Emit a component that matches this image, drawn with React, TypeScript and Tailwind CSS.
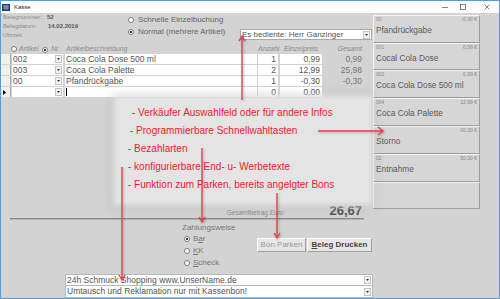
import React from 'react';

const ROWS = [
  { nr: '002', name: 'Coca Cola Dose 500 ml', qty: '1', price: '0,99', total: '0,99' },
  { nr: '003', name: 'Coca Cola Palette', qty: '2', price: '12,99', total: '25,98' },
  { nr: '00', name: 'Pfandrückgabe', qty: '1', price: '-0,30', total: '-0,30' },
  { nr: '', name: '', qty: '0', price: '0,00', total: '', current: true },
];

const KEYS = [
  { code: '00', name: 'Pfandrückgabe', price: '-0,30 €', h: 'h-[28px]' },
  { code: '001', name: 'Cocal Cola Dose', price: '0,59 €', h: 'h-[27px]' },
  { code: '002', name: 'Coca Cola Dose 500 ml', price: '0,99 €', h: 'h-[28px]' },
  { code: '004', name: 'Coca Cola Palette', price: '12,99 €', h: 'h-[28px]' },
  { code: '', name: 'Storno', price: '00,00 €', h: 'h-[28px]' },
  { code: '02', name: 'Entnahme', price: '50,00 €', h: 'h-[28px]' },
  { code: '', name: '', price: '', h: 'h-[27px]' },
];

const NOTES = [
  { text: '- Verkäufer Auswahlfeld oder für andere Infos', cls: 'ml-[4px]' },
  { text: '- Programmierbare Schnellwahltasten', cls: 'ml-[2px]' },
  { text: '- Bezahlarten', cls: 'ml-0' },
  { text: '- konfigurierbare End- u- Werbetexte', cls: 'ml-0' },
  { text: '- Funktion zum Parken, bereits angelgter Bons', cls: 'ml-0' },
];

function Radio({ on }: { on?: boolean }) {
  return (
    <span className="inline-flex h-[6px] w-[6px] shrink-0 items-center justify-center rounded-full border border-[#7a7a7a] bg-white">
      {on && <span className="h-[2px] w-[2px] rounded-full bg-black" />}
    </span>
  );
}

function DropBtn() {
  return (
    <span className="ml-auto mr-[1px] flex h-[8px] w-[7px] shrink-0 items-center justify-center border border-[#c4c4c4] bg-[#f2f2f2]">
      <svg width="3" height="2" viewBox="0 0 3 2">
        <path d="M0 0h3L1.5 2z" fill="#333" />
      </svg>
    </span>
  );
}

export default function App() {
  return (
    <div className="relative flex h-[299px] w-[500px] flex-col overflow-hidden border border-[#5b9bd5] bg-[#d3d3d3] font-['Liberation_Sans',Arial,sans-serif] text-[#666]">
      {/* title bar */}
      <div className="flex h-[12px] shrink-0 items-center bg-white">
        <svg className="ml-[1px]" width="8" height="7" viewBox="0 0 8 7">
          <rect width="8" height="7" fill="#1f3a6e" />
          <path d="M1 2h6M1 4h6M3 1v5M5 1v5" stroke="#cfd8e8" strokeWidth="0.6" />
        </svg>
        <span className="ml-[4px] text-[6px] leading-none text-[#222]">Kasse</span>
        <div className="ml-auto flex items-center pr-[9px]">
          <svg width="6" height="6" viewBox="0 0 6 6">
            <path d="M0 3.5h6" stroke="#333" strokeWidth="0.6" />
          </svg>
          <svg className="ml-[12px]" width="6" height="6" viewBox="0 0 6 6">
            <rect x="0.5" y="0.5" width="5" height="5" fill="none" stroke="#333" strokeWidth="0.6" />
          </svg>
          <svg className="ml-[18px]" width="6" height="6" viewBox="0 0 6 6">
            <path d="M0.5 0.5l5 5M5.5 0.5l-5 5" stroke="#333" strokeWidth="0.6" />
          </svg>
        </div>
      </div>

      <div className="flex flex-1">
        {/* main form */}
        <div className="flex w-[372px] flex-col">
          <div className="flex h-[30px]">
            <div className="w-[125px] pl-[2px] text-[6px] leading-[9px] text-[#8c8c8c]">
              <div>
                <span className="inline-block w-[44px]">Belegnummer:</span>
                <span className="font-bold text-[#555]">52</span>
              </div>
              <div>
                <span className="inline-block w-[45px]">Belegdatum:</span>
                <span className="font-bold text-[#555]">14.02.2019</span>
              </div>
              <div>Uhrzeit</div>
            </div>
            <div className="w-[114px] pl-[2px] pt-[1px] text-[8px] leading-[12px] text-[#666]">
              <div className="flex items-center gap-[4px]">
                <Radio />
                <span>Schnelle Einzelbuchung</span>
              </div>
              <div className="flex items-center gap-[4px]">
                <Radio on />
                <span>Normal (mehrere Artikel)</span>
              </div>
            </div>
            <div className="mt-[16px] flex h-[11px] w-[132px] items-center border border-[#a8a8a8] bg-white pl-[1px] text-[8px] leading-none text-[#555]">
              <span>Es bediente: Herr Ganzinger</span>
              <DropBtn />
            </div>
          </div>

          {/* column headers */}
          <div className="flex h-[11px] items-center text-[7px] italic leading-none text-[#8a8a8a]">
            <span className="w-[10px]" />
            <Radio />
            <span className="ml-[2px] inline-block w-[21px]">Artikel</span>
            <span className="ml-[2px]">
              <Radio on />
            </span>
            <span className="ml-[3px] inline-block w-[15px]">Nr</span>
            <span className="inline-block w-[192px]">Artikelbeschreibung</span>
            <span className="inline-block w-[19px] text-right">Anzahl</span>
            <span className="ml-[2px] inline-block w-[44px] text-center">Einzelpreis</span>
            <span className="inline-block w-[39px] text-right">Gesamt</span>
          </div>

          {/* rows */}
          {ROWS.map((r, i) => (
            <div key={i} className="flex h-[11px] items-start text-[8.5px] leading-[10px] text-[#555]">
              <span className="flex h-[10px] w-[10px] items-center border-r border-[#a8a8a8] bg-[#f0f0f0] pl-[2px]">
                {r.current && (
                  <svg width="3" height="5" viewBox="0 0 3 5">
                    <path d="M0 0l3 2.5L0 5z" fill="#000" />
                  </svg>
                )}
              </span>
              <span className="ml-[1px] flex h-[10px] w-[51px] items-center bg-white pl-[1px]">
                <span>{r.nr}</span>
                <DropBtn />
              </span>
              <span className="ml-[2px] flex h-[10px] w-[192px] items-center bg-white pl-[1px]">
                {r.current ? <span className="h-[8px] w-[1px] bg-black" /> : r.name}
              </span>
              <span className="ml-[1px] h-[10px] w-[20px] bg-white pr-[2px] text-right">{r.qty}</span>
              <span className="ml-[2px] h-[10px] w-[42px] bg-white pr-[2px] text-right">{r.price}</span>
              <span className="h-[10px] w-[40px] text-right text-[#777]">{r.total}</span>
            </div>
          ))}

          <div className="h-[104px]" />

          {/* total */}
          <div className="flex h-[16px] items-end justify-end pb-[1px] pr-[11px] leading-none">
            <span className="mb-[1px] text-[6.5px] text-[#8a8a8a]">
              Gesamtbetrag <i>Euro</i>
            </span>
            <span className="ml-[46px] text-[13px] font-bold text-[#555]">26,67</span>
          </div>
          <div className="ml-[9px] h-[2px] w-[354px] border-t border-b border-t-[#8c8c8c] border-b-[#b0b0b0]" />

          {/* payment + buttons */}
          <div className="flex h-[52px]">
            <div className="ml-[181px] w-[75px] pt-[3px] text-[8px] text-[#777]">
              <div className="leading-[10px]">Zahlungsweise</div>
              <div className="pl-[2px] leading-[12px]">
                <div className="flex items-center gap-[3px]">
                  <Radio on />
                  <span>
                    B<u>a</u>r
                  </span>
                </div>
                <div className="flex items-center gap-[3px]">
                  <Radio />
                  <span>
                    <u>K</u>K
                  </span>
                </div>
                <div className="flex items-center gap-[3px]">
                  <Radio />
                  <span>
                    <u>S</u>check
                  </span>
                </div>
              </div>
            </div>
            <div className="mt-[18px] flex h-[14px]">
              <button className="w-[49px] border border-t-white border-l-white border-r-[#a0a0a0] border-b-[#a0a0a0] bg-[#e6e6e6] text-[8px] text-[#9a9a9a]">
                Bon Parken
              </button>
              <button className="ml-[1px] w-[65px] border border-t-white border-l-white border-r-[#a0a0a0] border-b-[#a0a0a0] bg-[#e6e6e6] text-[8px] font-bold text-[#444]">
                <u>B</u>eleg Drucken
              </button>
            </div>
          </div>

          {/* footer texts */}
          <div className="ml-[64px] mt-[2px] w-[308px] text-[8.5px] leading-none text-[#555]">
            <div className="flex h-[12px] items-center border border-[#b8b8b8] bg-white pl-[1px]">
              <span>24h Schmuck Shopping www.UnserName.de</span>
              <DropBtn />
            </div>
            <div className="flex h-[12px] items-center border border-t-0 border-[#b8b8b8] bg-white pl-[1px]">
              <span>Umtausch und Reklamation nur mit Kassenbon!</span>
              <DropBtn />
            </div>
          </div>
        </div>

        {/* quick keys */}
        <div className="mt-[2px] flex w-[107px] flex-col">
          {KEYS.map((k, i) => (
            <div
              key={i}
              className={`${k.h} border border-t-[#f4f4f4] border-l-[#f4f4f4] border-r-[#9c9c9c] border-b-[#9c9c9c] bg-[#d6d6d6] px-[2px] pt-[1px]`}
            >
              <div className="flex h-[5px] justify-between text-[5px] leading-[5px] text-[#8a8a8a]">
                <span>{k.code}</span>
                <span>{k.price}</span>
              </div>
              <div className="mt-[3px] text-[8.3px] leading-[10px] text-[#5a5a5a]">{k.name}</div>
            </div>
          ))}
        </div>
      </div>

      {/* annotation panel */}
      <div className="absolute left-[116px] top-[98px] h-[103px] w-[252px] bg-[#e4e4e4] pl-[11px] pt-[5px] shadow-[0_0_5px_4px_rgba(228,228,228,0.9),0_1px_9px_5px_rgba(140,140,140,0.25)]">
        {NOTES.map((n) => (
          <div key={n.text} className={`${n.cls} whitespace-nowrap text-[10px] leading-[18px] text-[#ee1c2c]`}>
            {n.text}
          </div>
        ))}
      </div>

      <svg
        className="pointer-events-none absolute left-0 top-0"
        width="500"
        height="299"
        viewBox="0 0 500 299"
        style={{ filter: 'drop-shadow(1px 1px 1px rgba(0,0,0,0.25))' }}
      >
        <g fill="none" stroke="#ea3f4c" strokeWidth="1.4">
          <path d="M241 99V35M238 40l3-5 3 5" />
          <path d="M201 147v74M198 216l3 5 3-5" />
          <path d="M121 166v113M118 274l3 5 3-5" />
          <path d="M276 192v45M273 232l3 5 3-5" />
          <path d="M317 130h65M377 126l5 4-5 4" />
        </g>
      </svg>
    </div>
  );
}
